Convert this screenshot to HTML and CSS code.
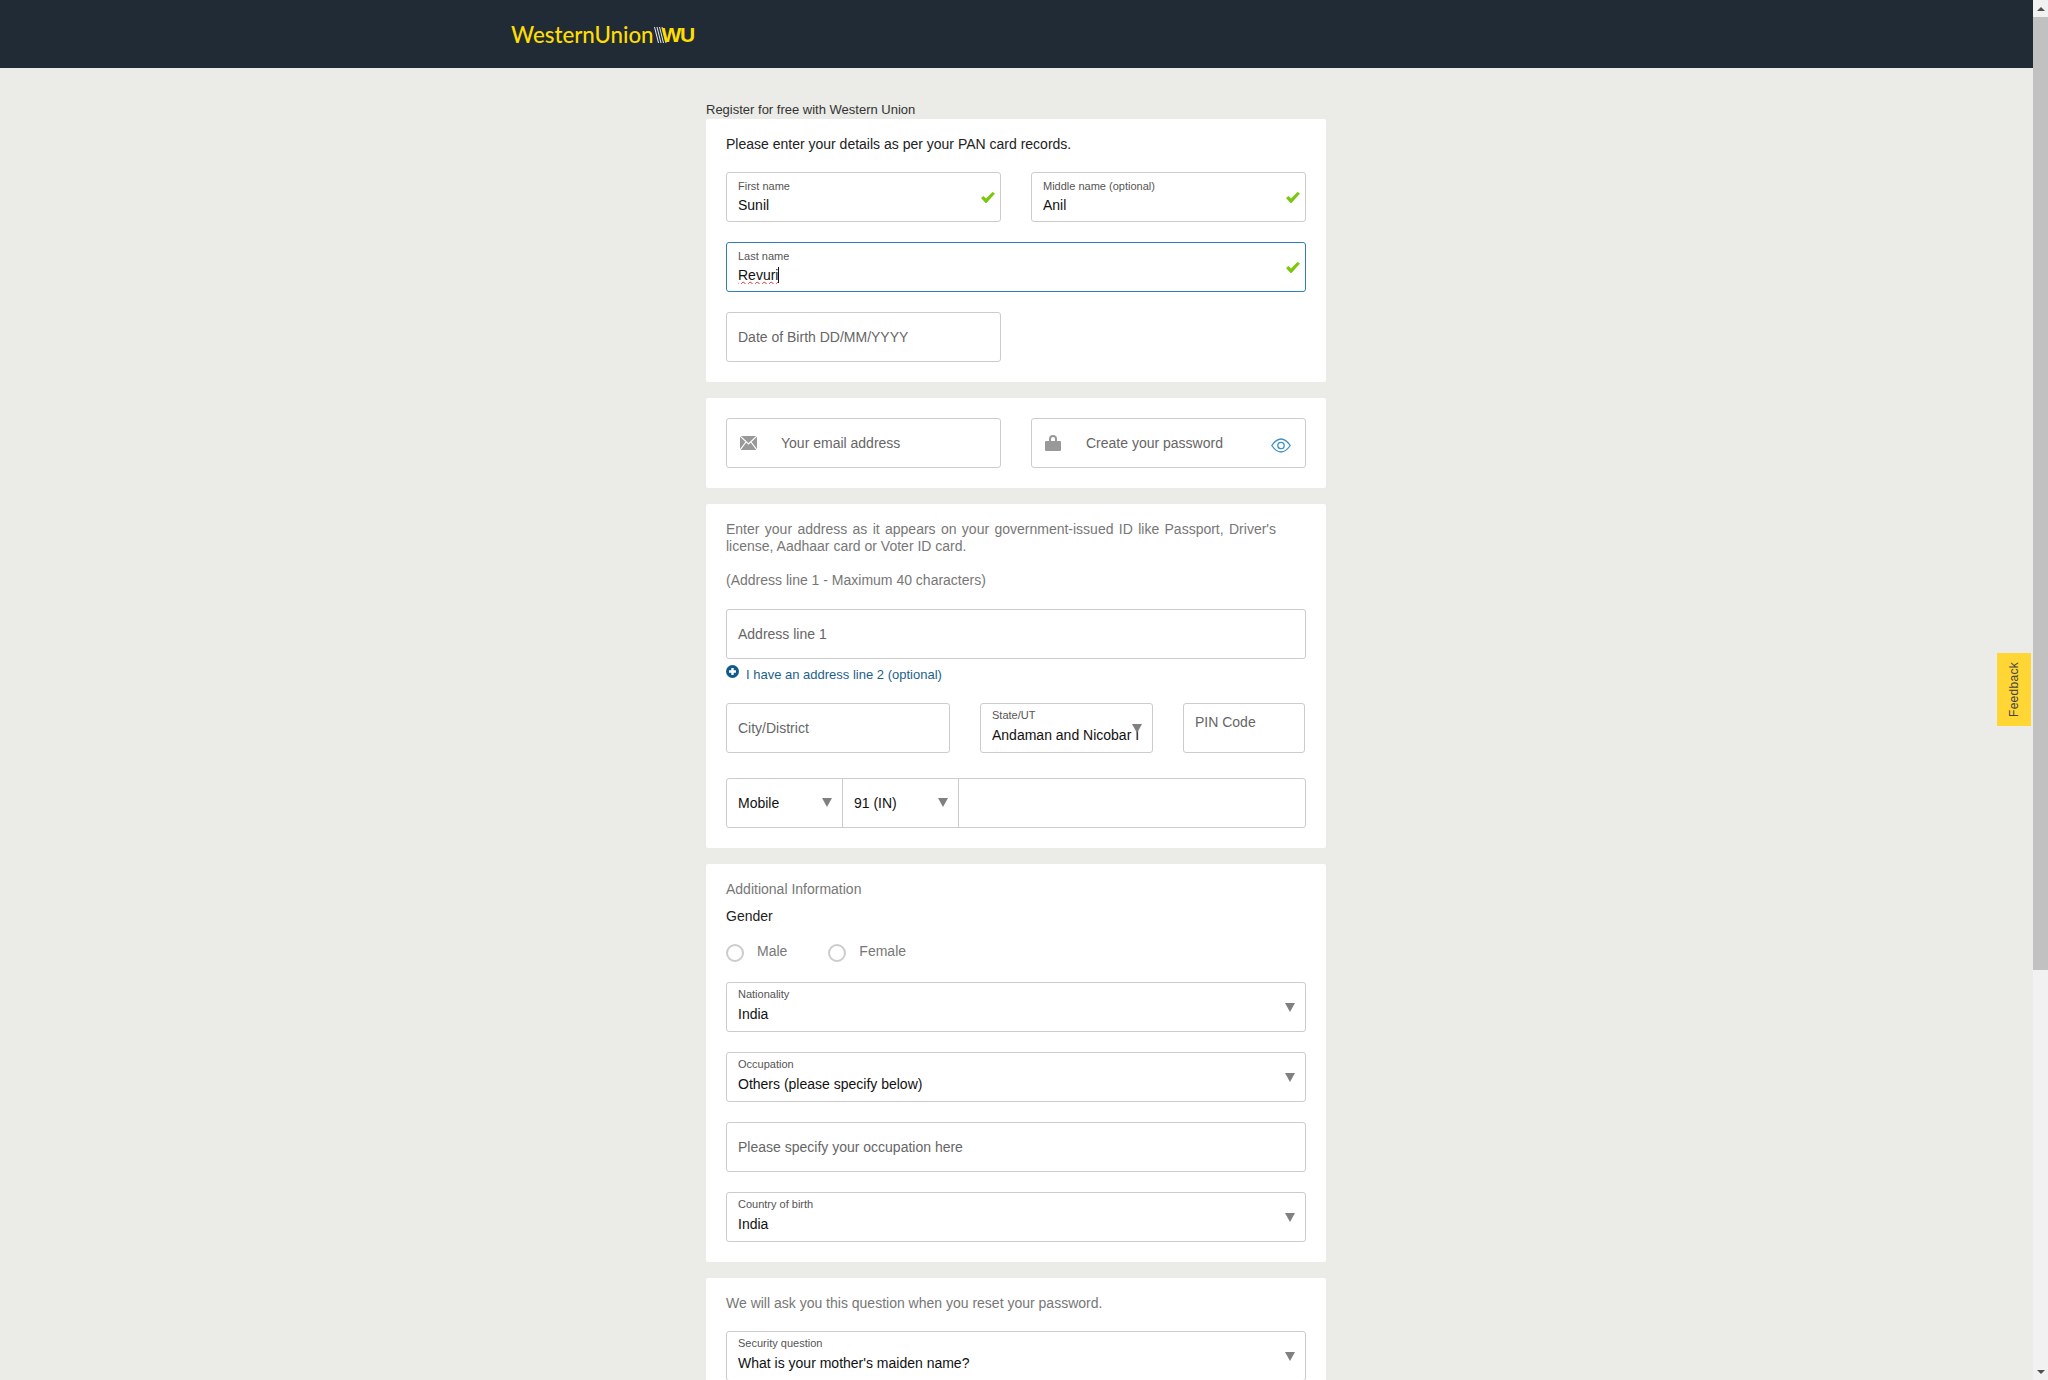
FILE: index.html
```html
<!DOCTYPE html>
<html lang="en">
<head>
    <meta charset="UTF-8">
    <meta name="viewport" content="width=device-width, initial-scale=1.0">
    <title>Register - Western Union</title>
    <link rel="stylesheet" href="styles.css">
</head>
<body>
    <div class="page">
        <header class="topbar">
            <div class="topbar-inner">
                <a class="logo" href="#">
                    <span class="logo-name">WesternUnion</span>
                    <svg class="logo-stripes" width="13" height="16" viewBox="0 0 13 16">
                        <path d="M0.5 0L4.5 16M3 0L7 16M5.5 0L9.5 16M8 0L12 16" stroke="#e8e8e8" stroke-width="1" fill="none"/>
                    </svg>
                    <span class="logo-mark">WU</span>
                </a>
            </div>
        </header>

        <main class="container">
            <div class="page-title">Register for free with Western Union</div>

            <section class="card">
                <p class="intro dark">Please enter your details as per your PAN card records.</p>
                <div class="rows">
                    <div class="two-col">
                        <div class="field filled">
                            <span class="field-label">First name</span>
                            <span class="field-value">Sunil</span>
                            <svg class="check" width="14" height="11" viewBox="0 0 14 11"><path d="M0 6L2.5 4L5 6.5L11.5 0L14 1.5L5.5 11H4.5Z" fill="#7ac70c"/></svg>
                        </div>
                        <div class="field filled">
                            <span class="field-label">Middle name (optional)</span>
                            <span class="field-value">Anil</span>
                            <svg class="check" width="14" height="11" viewBox="0 0 14 11"><path d="M0 6L2.5 4L5 6.5L11.5 0L14 1.5L5.5 11H4.5Z" fill="#7ac70c"/></svg>
                        </div>
                    </div>
                    <div class="field filled focused">
                        <span class="field-label">Last name</span>
                        <span class="field-value"><span class="misspelled">Revuri</span><span class="caret"></span></span>
                        <svg class="check" width="14" height="11" viewBox="0 0 14 11"><path d="M0 6L2.5 4L5 6.5L11.5 0L14 1.5L5.5 11H4.5Z" fill="#7ac70c"/></svg>
                    </div>
                    <div class="two-col">
                        <div class="field"><span class="placeholder">Date of Birth DD/MM/YYYY</span></div>
                    </div>
                </div>
            </section>

            <section class="card card-tight">
                <div class="two-col">
                    <div class="field with-icon">
                        <svg class="field-icon" width="17" height="14" viewBox="0 0 17 14">
                            <rect width="17" height="14" fill="#999"/>
                            <path d="M0 0L8.5 8L17 0M0 14L6 6M17 14L11 6" stroke="#fff" stroke-width="1.2" fill="none"/>
                        </svg>
                        <span class="placeholder">Your email address</span>
                    </div>
                    <div class="field with-icon">
                        <svg class="field-icon lock" width="16" height="16" viewBox="0 0 16 16">
                            <path d="M4 6V4a4 4 0 0 1 8 0v2h3a1 1 0 0 1 1 1v8a1 1 0 0 1-1 1H1a1 1 0 0 1-1-1V7a1 1 0 0 1 1-1zM6 6h4V4a2 2 0 0 0-4 0z" fill="#999"/>
                        </svg>
                        <span class="placeholder">Create your password</span>
                        <svg class="eye" width="20" height="15" viewBox="0 0 20 15" fill="none" stroke="#3d8fc6" stroke-width="1.3">
                            <path d="M0.8 7.5C4 2.8 7 1 10 1s6 1.8 9.2 6.5C16 12.2 13 14 10 14S4 12.2 0.8 7.5Z"/>
                            <circle cx="10" cy="7.5" r="3.2"/>
                        </svg>
                    </div>
                </div>
            </section>

            <section class="card card-address">
                <p class="address-note">Enter your address as it appears on your government-issued ID like Passport, Driver's license, Aadhaar card or Voter ID card.</p>
                <p class="address-note address-limit">(Address line 1 - Maximum 40 characters)</p>
                <div class="field"><span class="placeholder">Address line 1</span></div>
                <a class="add-line" href="#">
                    <svg width="13" height="13" viewBox="0 0 13 13">
                        <circle cx="6.5" cy="6.5" r="6.5" fill="#0f5a8a"/>
                        <path d="M6.5 3V10M3 6.5H10" stroke="#fff" stroke-width="2.4"/>
                    </svg>
                    <span>I have an address line 2 (optional)</span>
                </a>
                <div class="city-row">
                    <div class="field city"><span class="placeholder">City/District</span></div>
                    <div class="field select state">
                        <span class="field-label">State/UT</span>
                        <span class="field-value">Andaman and Nicobar Islands</span>
                        <span class="arrow"></span>
                    </div>
                    <div class="field pin"><span class="placeholder">PIN Code</span></div>
                </div>
                <div class="phone-group">
                    <div class="phone-part phone-type">Mobile<span class="arrow"></span></div>
                    <div class="phone-part phone-code">91 (IN)<span class="arrow"></span></div>
                    <div class="phone-number"></div>
                </div>
            </section>

            <section class="card">
                <p class="intro">Additional Information</p>
                <div class="gender-label">Gender</div>
                <div class="radios">
                    <label class="radio"><span class="radio-dot"></span>Male</label>
                    <label class="radio"><span class="radio-dot"></span>Female</label>
                </div>
                <div class="rows">
                    <div class="field select">
                        <span class="field-label">Nationality</span>
                        <span class="field-value">India</span>
                        <span class="arrow"></span>
                    </div>
                    <div class="field select">
                        <span class="field-label">Occupation</span>
                        <span class="field-value">Others (please specify below)</span>
                        <span class="arrow"></span>
                    </div>
                    <div class="field"><span class="placeholder">Please specify your occupation here</span></div>
                    <div class="field select">
                        <span class="field-label">Country of birth</span>
                        <span class="field-value">India</span>
                        <span class="arrow"></span>
                    </div>
                </div>
            </section>

            <section class="card">
                <p class="intro">We will ask you this question when you reset your password.</p>
                <div class="field select">
                    <span class="field-label">Security question</span>
                    <span class="field-value">What is your mother's maiden name?</span>
                    <span class="arrow"></span>
                </div>
            </section>
        </main>

        <a class="feedback" href="#">Feedback</a>
    </div>

    <div class="scrollbar">
        <div class="scroll-btn"><span class="scroll-up"></span></div>
        <div class="scroll-track"><div class="scroll-thumb"></div></div>
        <div class="scroll-btn"><span class="scroll-down"></span></div>
    </div>
</body>
</html>
```

FILE: styles.css
```css
* {
    box-sizing: border-box;
}
html, body {
    height: 100%;
}
body {
    margin: 0;
    display: flex;
    overflow: hidden;
    font-family: "Liberation Sans", Arial, sans-serif;
    font-size: 14px;
    color: #222;
    background-color: #ebebe7;
}
a {
    text-decoration: none;
}
p {
    margin: 0;
}
.page {
    flex: 1;
    min-width: 0;
    height: 100vh;
    overflow: hidden;
    position: relative;
}
.topbar {
    height: 68px;
    background-color: #212b36;
}
.topbar-inner {
    width: 1011px;
    margin: 0 auto;
    padding-top: 23px;
}
.logo {
    display: inline-flex;
    align-items: center;
    height: 24px;
    color: #ffdd00;
    font-family: Lato, sans-serif;
    font-size: 22.3px;
    line-height: 24px;
}
.logo-name {
    font-weight: 500;
}
.logo-mark {
    font-family: "Liberation Sans", Arial, sans-serif;
    font-size: 21px;
    font-weight: 700;
    letter-spacing: -1.5px;
    margin-left: -5px;
}
.container {
    width: 620px;
    margin-left: 706px;
    padding-top: 33px;
}
.page-title {
    font-size: 13px;
    line-height: 18px;
    color: #333;
}
.card {
    background: white;
    border-radius: 2px;
    padding: 16px 20px 20px;
    margin-bottom: 16px;
}
.card-tight {
    padding-top: 20px;
}
.card-address {
    padding-top: 17px;
}
.intro {
    font-size: 14px;
    line-height: 18px;
    margin-bottom: 19px;
    color: #777;
}
.intro.dark {
    color: #222;
}
.rows {
    display: flex;
    flex-direction: column;
    gap: 20px;
}
.two-col {
    display: grid;
    grid-template-columns: 1fr 1fr;
    gap: 30px;
}
.field {
    position: relative;
    height: 50px;
    display: flex;
    flex-direction: column;
    justify-content: center;
    padding: 0 11px;
    border: 1px solid #ccc;
    border-radius: 3px;
    background: white;
}
.field.filled, .field.select {
    justify-content: flex-start;
}
.field.filled {
    padding-top: 6px;
}
.field.select {
    padding-top: 4px;
}
.field.focused {
    border-color: #2f7fb5;
}
.field-label {
    font-size: 11px;
    line-height: 14px;
    color: #555;
}
.field-value {
    font-size: 14px;
    line-height: 18px;
    color: #111;
    margin-top: 3px;
    white-space: nowrap;
    overflow: hidden;
}
.field.select .field-value {
    margin-top: 4px;
}
.placeholder {
    font-size: 14px;
    line-height: 18px;
    color: #666;
}
.check {
    position: absolute;
    right: 5px;
    top: 19px;
}
.misspelled {
    text-decoration: underline wavy #d33;
    text-decoration-thickness: 1px;
}
.caret {
    display: inline-block;
    width: 1px;
    height: 16px;
    vertical-align: -3px;
    background: #111;
}
.with-icon {
    flex-direction: row;
    justify-content: flex-start;
    align-items: center;
    gap: 24px;
    padding-left: 13px;
}
.with-icon .placeholder {
    margin-top: -1px;
}
.lock {
    margin-right: 1px;
}
.eye {
    position: absolute;
    right: 14px;
    top: 19px;
}
.arrow {
    position: absolute;
    right: 10px;
    top: 20px;
    width: 0;
    height: 0;
    border-left: 5px solid transparent;
    border-right: 5px solid transparent;
    border-top: 9px solid #808080;
}
.address-note {
    font-size: 14px;
    line-height: 17px;
    color: #777;
    padding-right: 30px;
}
.address-note:first-of-type {
    text-align: justify;
}
.address-limit {
    margin-top: 17px;
    margin-bottom: 20px;
}
.add-line {
    display: flex;
    align-items: flex-start;
    gap: 7px;
    height: 16px;
    margin-top: 6px;
    font-size: 13px;
    line-height: 16px;
    color: #1d5f8a;
}
.add-line span {
    padding-top: 2px;
}
.city-row {
    display: flex;
    gap: 30px;
    margin-top: 22px;
}
.city {
    width: 224px;
}
.state {
    width: 173px;
    padding-right: 13px;
}
.pin {
    width: 122px;
    justify-content: flex-start;
    padding-top: 9px;
}
.phone-group {
    display: flex;
    height: 50px;
    margin-top: 25px;
    border: 1px solid #ccc;
    border-radius: 3px;
}
.phone-part {
    position: relative;
    display: flex;
    align-items: center;
    width: 116px;
    padding-left: 11px;
    border-right: 1px solid #ccc;
    color: #111;
}
.phone-type .arrow, .phone-code .arrow {
    top: 19px;
}
.phone-number {
    flex: 1;
}
.gender-label {
    line-height: 18px;
    margin-top: -10px;
    color: #222;
}
.radios {
    display: flex;
    gap: 41px;
    height: 20px;
    margin-top: 18px;
    margin-bottom: 19px;
}
.radio {
    display: flex;
    gap: 13px;
    line-height: 16px;
    color: #777;
}
.radio-dot {
    width: 18px;
    height: 18px;
    margin-top: 1px;
    border: 2px solid #ccc;
    border-radius: 50%;
}
.feedback {
    position: absolute;
    left: 1997px;
    top: 653px;
    width: 34px;
    height: 73px;
    display: flex;
    align-items: center;
    justify-content: center;
    writing-mode: vertical-rl;
    transform: rotate(180deg);
    background-color: #ffd633;
    color: #444;
    font-size: 12px;
    letter-spacing: 0.3px;
}
.scrollbar {
    flex: none;
    width: 15px;
    height: 100vh;
    display: flex;
    flex-direction: column;
    background-color: #f1f1f1;
}
.scroll-btn {
    flex: none;
    height: 17px;
    display: flex;
    align-items: center;
    justify-content: center;
}
.scroll-up, .scroll-down {
    width: 0;
    height: 0;
    border-left: 4px solid transparent;
    border-right: 4px solid transparent;
}
.scroll-up {
    border-bottom: 4px solid #505050;
}
.scroll-down {
    border-top: 4px solid #505050;
}
.scroll-track {
    flex: 1;
}
.scroll-thumb {
    height: 953px;
    background-color: #c1c1c1;
}
```
